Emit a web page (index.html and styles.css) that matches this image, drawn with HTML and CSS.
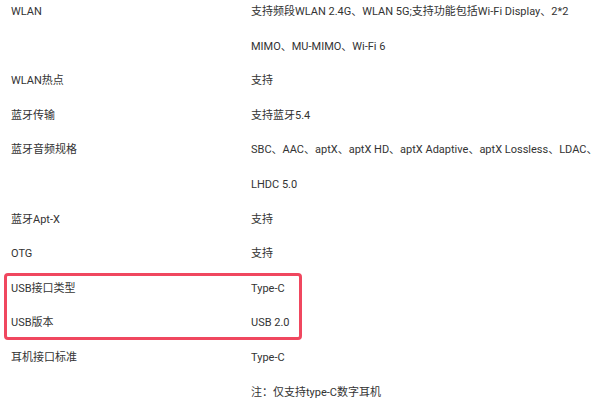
FILE: index.html
```html
<!DOCTYPE html>
<html lang="zh-CN">
<head>
    <meta charset="UTF-8">
    <title>规格参数</title>
    <link rel="stylesheet" href="styles.css">
</head>
<body>
<div class="specs">
    <div class="row">
        <div class="label">WLAN</div>
        <div class="value">支持频段WLAN 2.4G、WLAN 5G;支持功能包括Wi-Fi Display、2*2<br>MIMO、MU-MIMO、Wi-Fi 6</div>
    </div>
    <div class="row">
        <div class="label">WLAN热点</div>
        <div class="value">支持</div>
    </div>
    <div class="row">
        <div class="label">蓝牙传输</div>
        <div class="value">支持蓝牙5.4</div>
    </div>
    <div class="row">
        <div class="label">蓝牙音频规格</div>
        <div class="value">SBC、AAC、aptX、aptX HD、aptX Adaptive、aptX Lossless、LDAC、<br>LHDC 5.0</div>
    </div>
    <div class="row">
        <div class="label">蓝牙Apt-X</div>
        <div class="value">支持</div>
    </div>
    <div class="row">
        <div class="label">OTG</div>
        <div class="value">支持</div>
    </div>
    <div class="highlight">
        <div class="row">
            <div class="label">USB接口类型</div>
            <div class="value">Type-C</div>
        </div>
        <div class="row">
            <div class="label">USB版本</div>
            <div class="value">USB 2.0</div>
        </div>
    </div>
    <div class="row">
        <div class="label">耳机接口标准</div>
        <div class="value">Type-C<br>注：仅支持type-C数字耳机</div>
    </div>
</div>
</body>
</html>
```

FILE: styles.css
```css
body {
    margin: 0;
    background: #fff;
    font-family: "Roboto", "Noto Sans CJK SC", sans-serif;
    font-size: 11px;
    color: #333;
}

.specs {
    margin-top: -5px;
}

.row {
    display: grid;
    grid-template-columns: 240px 1fr;
    padding-left: 11px;
    line-height: 34.6px;
}

.value {
    white-space: nowrap;
}

.highlight {
    width: 300px;
    margin-left: 3px;
    border-radius: 5px;
    outline: 3px solid #f0475f;
    outline-offset: -4px;
}

.highlight .row {
    padding-left: 8px;
}
```
